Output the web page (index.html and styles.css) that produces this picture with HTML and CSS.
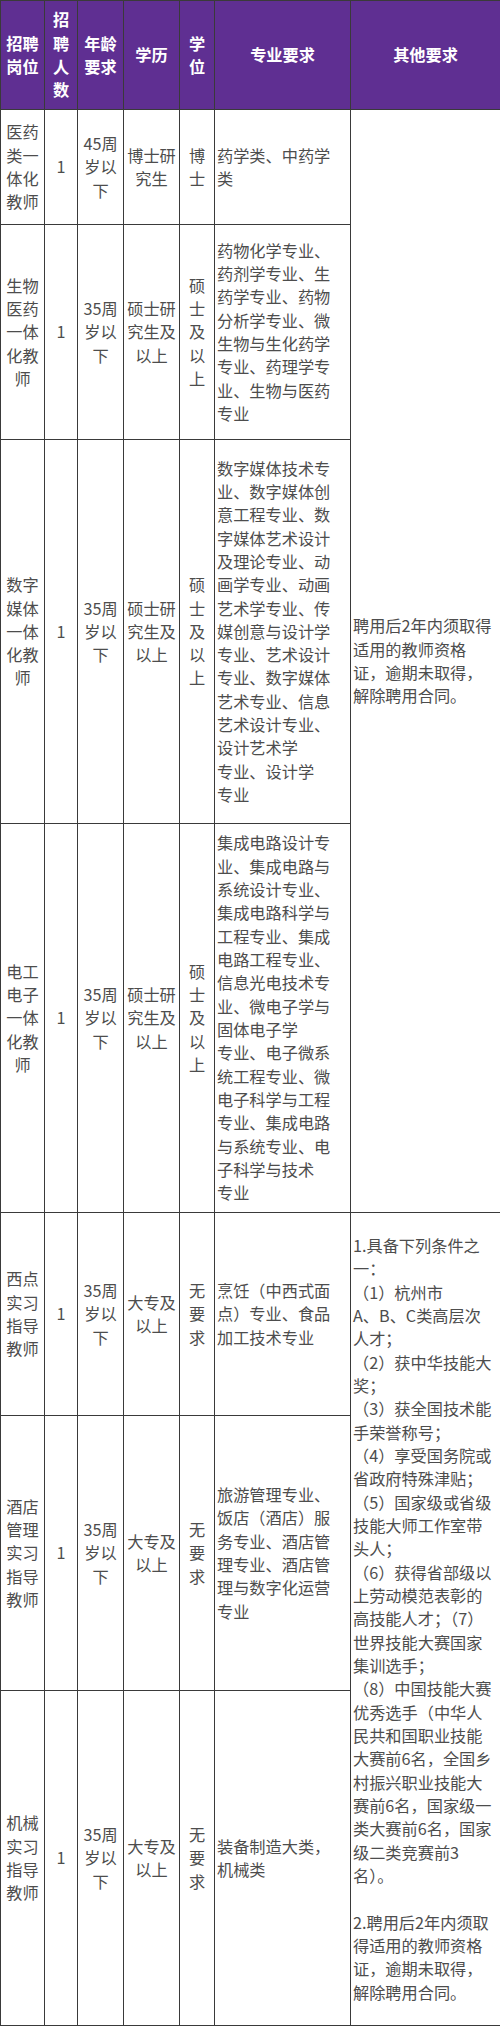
FILE: index.html
```html
<!DOCTYPE html>
<html lang="zh-CN">
<head>
<meta charset="utf-8">
<link rel="stylesheet" href="styles.css">
</head>
<body>
<table class="jobs">
  <colgroup>
    <col class="c-post"><col class="c-num"><col class="c-age"><col class="c-edu"><col class="c-deg"><col class="c-major"><col class="c-other">
  </colgroup>
  <thead>
    <tr class="head">
      <th>招聘<br>岗位</th>
      <th>招<br>聘<br>人<br>数</th>
      <th>年龄<br>要求</th>
      <th>学历</th>
      <th>学<br>位</th>
      <th>专业要求</th>
      <th>其他要求</th>
    </tr>
  </thead>
  <tbody>
    <tr class="r1">
      <td>医药<br>类一<br>体化<br>教师</td>
      <td>1</td>
      <td>45周<br>岁以<br>下</td>
      <td>博士研<br>究生</td>
      <td>博<br>士</td>
      <td class="left">药学类、中药学<br>类</td>
      <td class="left other" rowspan="4">聘用后2年内须取得<br>适用的教师资格<br>证，逾期未取得，<br>解除聘用合同。</td>
    </tr>
    <tr class="r2">
      <td>生物<br>医药<br>一体<br>化教<br>师</td>
      <td>1</td>
      <td>35周<br>岁以<br>下</td>
      <td>硕士研<br>究生及<br>以上</td>
      <td>硕<br>士<br>及<br>以<br>上</td>
      <td class="left">药物化学专业、<br>药剂学专业、生<br>药学专业、药物<br>分析学专业、微<br>生物与生化药学<br>专业、药理学专<br>业、生物与医药<br>专业</td>
    </tr>
    <tr class="r3">
      <td>数字<br>媒体<br>一体<br>化教<br>师</td>
      <td>1</td>
      <td>35周<br>岁以<br>下</td>
      <td>硕士研<br>究生及<br>以上</td>
      <td>硕<br>士<br>及<br>以<br>上</td>
      <td class="left">数字媒体技术专<br>业、数字媒体创<br>意工程专业、数<br>字媒体艺术设计<br>及理论专业、动<br>画学专业、动画<br>艺术学专业、传<br>媒创意与设计学<br>专业、艺术设计<br>专业、数字媒体<br>艺术专业、信息<br>艺术设计专业、<br>设计艺术学<br>专业、设计学<br>专业</td>
    </tr>
    <tr class="r4">
      <td>电工<br>电子<br>一体<br>化教<br>师</td>
      <td>1</td>
      <td>35周<br>岁以<br>下</td>
      <td>硕士研<br>究生及<br>以上</td>
      <td>硕<br>士<br>及<br>以<br>上</td>
      <td class="left">集成电路设计专<br>业、集成电路与<br>系统设计专业、<br>集成电路科学与<br>工程专业、集成<br>电路工程专业、<br>信息光电技术专<br>业、微电子学与<br>固体电子学<br>专业、电子微系<br>统工程专业、微<br>电子科学与工程<br>专业、集成电路<br>与系统专业、电<br>子科学与技术<br>专业</td>
    </tr>
    <tr class="r5">
      <td>西点<br>实习<br>指导<br>教师</td>
      <td>1</td>
      <td>35周<br>岁以<br>下</td>
      <td>大专及<br>以上</td>
      <td>无<br>要<br>求</td>
      <td class="left">烹饪（中西式面<br>点）专业、食品<br>加工技术专业</td>
      <td class="left other" rowspan="3">1.具备下列条件之<br>一：<br>（1）杭州市<br>A、B、C类高层次<br>人才；<br>（2）获中华技能大<br>奖；<br>（3）获全国技术能<br>手荣誉称号；<br>（4）享受国务院或<br>省政府特殊津贴；<br>（5）国家级或省级<br>技能大师工作室带<br>头人；<br>（6）获得省部级以<br>上劳动模范表彰的<br>高技能人才；（7）<br>世界技能大赛国家<br>集训选手；<br>（8）中国技能大赛<br>优秀选手（中华人<br>民共和国职业技能<br>大赛前6名，全国乡<br>村振兴职业技能大<br>赛前6名，国家级一<br>类大赛前6名，国家<br>级二类竞赛前3<br>名）。<br><br>2.聘用后2年内须取<br>得适用的教师资格<br>证，逾期未取得，<br>解除聘用合同。</td>
    </tr>
    <tr class="r6">
      <td>酒店<br>管理<br>实习<br>指导<br>教师</td>
      <td>1</td>
      <td>35周<br>岁以<br>下</td>
      <td>大专及<br>以上</td>
      <td>无<br>要<br>求</td>
      <td class="left">旅游管理专业、<br>饭店（酒店）服<br>务专业、酒店管<br>理专业、酒店管<br>理与数字化运营<br>专业</td>
    </tr>
    <tr class="r7">
      <td>机械<br>实习<br>指导<br>教师</td>
      <td>1</td>
      <td>35周<br>岁以<br>下</td>
      <td>大专及<br>以上</td>
      <td>无<br>要<br>求</td>
      <td class="left">装备制造大类，<br>机械类</td>
    </tr>
  </tbody>
</table>
</body>
</html>
```

FILE: styles.css
```css
html, body {
  margin: 0;
  padding: 0;
  background: #ffffff;
}

.jobs {
  width: 500px;
  table-layout: fixed;
  border-collapse: collapse;
  font-family: "Noto Sans CJK SC", "Noto Sans", sans-serif;
  font-size: 16.2px;
  line-height: 23.33px;
  color: #4d4d4d;
}

.c-post { width: 44px; }
.c-num { width: 33px; }
.c-age { width: 46px; }
.c-edu { width: 56px; }
.c-deg { width: 35px; }
.c-major { width: 136px; }
.c-other { width: 150px; }

.jobs th,
.jobs td {
  border: 1px solid #3a3a3a;
  padding: 0;
  text-align: center;
  vertical-align: middle;
  white-space: nowrap;
  overflow: visible;
}

.jobs .head th {
  background: #5f2f92;
  color: #ffffff;
  font-weight: 700;
  height: 108px;
}

.jobs td.left {
  text-align: left;
  padding: 0 0 0 2px;
}

.jobs td.other {
  padding-left: 2px;
}

.r1 td { height: 114px; }
.r2 td { height: 214px; }
.r3 td { height: 383px; }
.r4 td { height: 388px; }
.r5 td { height: 202px; }
.r6 td { height: 274px; }
.r7 td { height: 334px; }
```
